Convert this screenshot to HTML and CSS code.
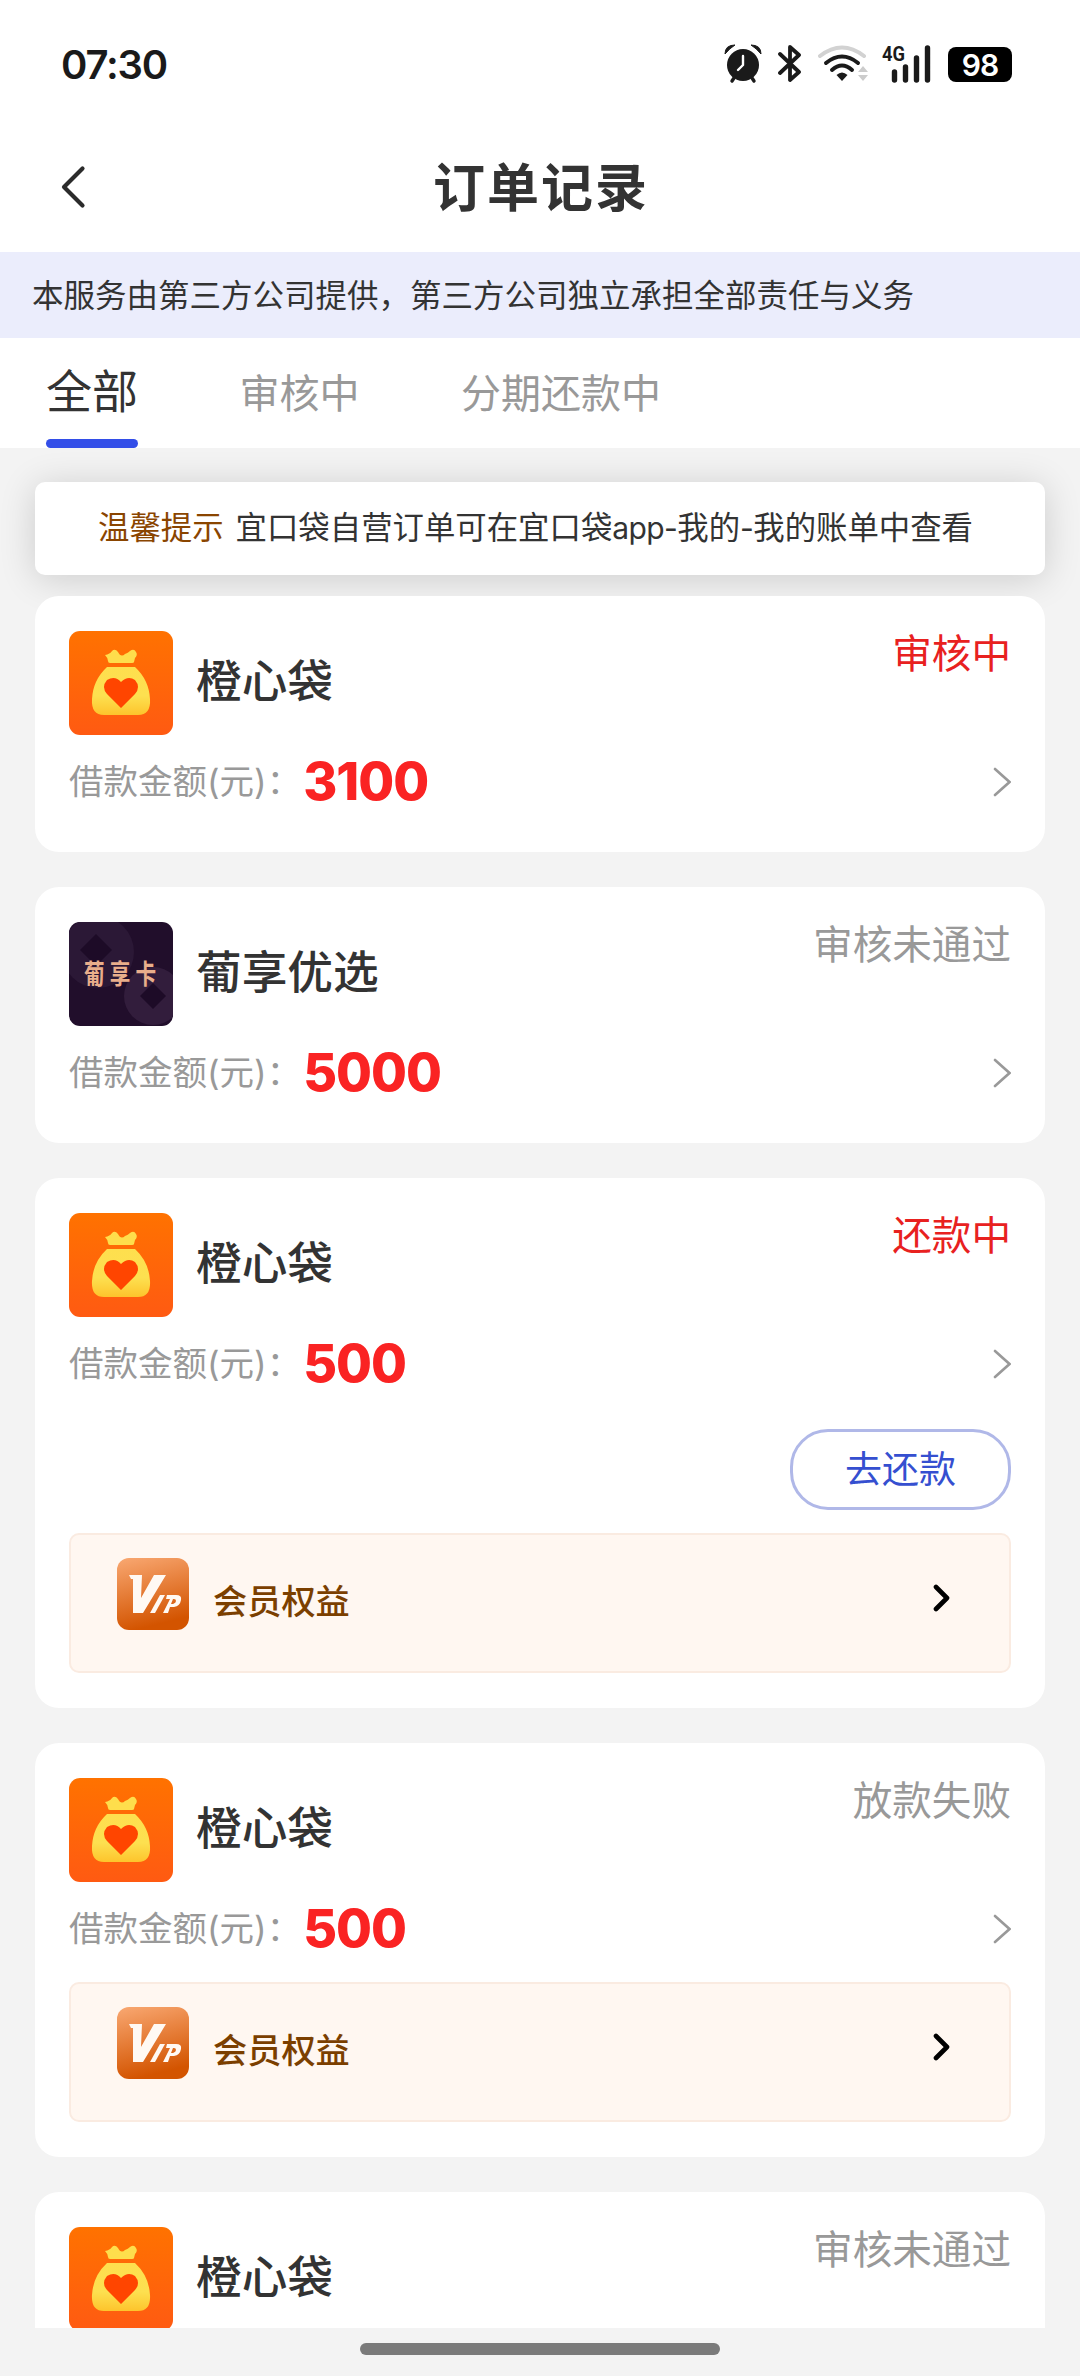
FILE: index.html
```html
<!DOCTYPE html>
<html lang="zh-CN">
<head>
<meta charset="utf-8">
<title>订单记录</title>
<link rel="stylesheet" href="styles.css">
</head>
<body>
<svg class="defs" width="0" height="0" aria-hidden="true">
  <defs>
    <linearGradient id="orange" x1="0" y1="0" x2="0" y2="1"><stop offset="0" stop-color="#ff7200"/><stop offset="1" stop-color="#ff5a12"/></linearGradient>
    <linearGradient id="gold" x1="0" y1="0" x2="0" y2="1"><stop offset="0" stop-color="#fedf4e"/><stop offset="0.6" stop-color="#fde050"/><stop offset="1" stop-color="#fdc42c"/></linearGradient>
    <linearGradient id="copper" x1="0" y1="0" x2="0.25" y2="1"><stop offset="0" stop-color="#f9a872"/><stop offset="1" stop-color="#d35400"/></linearGradient>
  </defs>
  <symbol id="bag" viewBox="0 0 104 104">
    <rect width="104" height="104" rx="11" fill="url(#orange)"/>
    <path d="M36 24 Q41 23 43 20 Q46 17 49 21 Q52 27 56 23 Q59 22 61 20 Q65 17 67 21 Q69 24 66 27 L65 31 Q65 32 63 32 H41 Q39 32 39 30 Q39 27 36 24 Z" fill="#fede4c"/>
    <path d="M38 36 H66 Q80 49 81 68 Q82 84 69 84 H35 Q22 84 23 68 Q24 49 38 36 Z" fill="url(#gold)"/>
    <path d="M52 77 L38 63 Q32 56 38 49 Q46 44 52 51 Q59 44 66 49 Q72 56 66 63 Z" fill="#ff4500"/>
  </symbol>
  <symbol id="more" viewBox="0 0 18 30">
    <path d="M2 2 L16.500 15 L2 28" fill="none" stroke="#999" stroke-width="2.6" stroke-linecap="round"/>
  </symbol>
  <symbol id="vip" viewBox="0 0 72 72">
    <rect width="72" height="72" rx="12" fill="url(#copper)"/>
    <path d="M12 17 H25 L24 40 L37 17 H49 L26 55 H16 L16 21 H14 Z" fill="#fff9f3"/>
    <path d="M43 37 H48 L38 55 H33 Z" fill="#fff9f3"/>
    <path fill-rule="evenodd" d="M50 37 H59 Q65 37 64 42 Q63 48 57 49 H53 L51 55 H46 L53 41 H49 Z M56 41 L54 46 H56 Q59 45 59 43 Q59 41 57 41 Z" fill="#fff9f3"/>
  </symbol>
  <symbol id="vip-more" viewBox="0 0 18 28">
    <path d="M3 3 L14 14 L3 25" fill="none" stroke="#000" stroke-width="4.6" stroke-linecap="round" stroke-linejoin="round"/>
  </symbol>
</svg>

<div class="screen">
  <div class="statusbar">
    <span class="clock">07:30</span>
    <div class="indicators">
      <svg class="alarm" width="38" height="40" viewBox="0 0 38 40">
        <circle cx="19" cy="21" r="16" fill="#1a1a1a"/>
        <path d="M1 10 Q1 1 11 1 Q6 4 1 10 Z M37 10 Q37 1 27 1 Q32 4 37 10 Z" fill="#1a1a1a" stroke="#1a1a1a" stroke-width="1"/>
        <path d="M10 34 L8 37 M28 34 L30 37" stroke="#1a1a1a" stroke-width="3.4" stroke-linecap="round"/>
        <path d="M19 12 V21 L14 26" fill="none" stroke="#fff" stroke-width="2.4" stroke-linecap="round" stroke-linejoin="round"/>
      </svg>
      <svg class="bluetooth" width="24" height="40" viewBox="0 0 24 40">
        <path d="M2 10 L21 28 L12 36 V3 L21 11 L2 29" fill="none" stroke="#1a1a1a" stroke-width="3.8" stroke-linejoin="round" stroke-linecap="round"/>
      </svg>
      <svg class="wifi" width="50" height="40" viewBox="0 0 50 40">
        <path d="M2 12 Q24 -5 46 12" fill="none" stroke="#d2d2d2" stroke-width="4" stroke-linecap="round"/>
        <path d="M8 19 Q24 6 40 19" fill="none" stroke="#1a1a1a" stroke-width="4" stroke-linecap="round"/>
        <path d="M14 26 Q24 17 34 26" fill="none" stroke="#1a1a1a" stroke-width="4" stroke-linecap="round"/>
        <path d="M18.500 31 Q24 26 29.500 31 L24 37 Z" fill="#1a1a1a"/>
        <path d="M40 28 L45 22 L50 28 Z M40 31 L45 37 L50 31 Z" fill="#ccc"/>
      </svg>
      <svg class="cell" width="50" height="40" viewBox="0 0 50 40">
        <text class="net" x="0" y="17" textLength="23" lengthAdjust="spacingAndGlyphs">4G</text>
        <path d="M12.500 28 V36 M23.500 23 V36 M34.500 14 V36 M45.500 4 V36" stroke="#1a1a1a" stroke-width="5.400" stroke-linecap="round"/>
      </svg>
      <span class="battery">98</span>
    </div>
  </div>

  <header class="titlebar">
    <svg class="back" width="26" height="44" viewBox="0 0 26 44">
      <path d="M22.500 3.500 L4 22 L22.500 40.500" fill="none" stroke="#2b2b2b" stroke-width="4.200" stroke-linecap="round" stroke-linejoin="round"/>
    </svg>
    <h1 class="title">订单记录</h1>
  </header>

  <p class="notice">本服务由第三方公司提供，第三方公司独立承担全部责任与义务</p>

  <nav class="tabs">
    <a class="tab active">全部</a>
    <a class="tab">审核中</a>
    <a class="tab">分期还款中</a>
  </nav>

  <main class="list">
    <div class="tip"><span class="tip-label">温馨提示</span><span class="tip-text">宜口袋自营订单可在宜口袋<span class="latin">app-</span>我的<span class="latin">-</span>我的账单中查看</span></div>

    <section class="card">
      <div class="head">
        <svg class="logo"><use href="#bag"/></svg>
        <h2 class="name">橙心袋</h2>
        <span class="state red">审核中</span>
      </div>
      <div class="amount"><span class="label">借款金额(元)：</span><b class="sum">3100</b><svg class="more"><use href="#more"/></svg></div>
    </section>

    <section class="card">
      <div class="head">
        <svg class="logo" viewBox="0 0 104 104">
          <clipPath id="round"><rect width="104" height="104" rx="11"/></clipPath>
          <g clip-path="url(#round)">
            <rect width="104" height="104" fill="#210e2b"/>
            <circle cx="29" cy="30" r="36" fill="#2b1836"/>
            <path d="M27 12 L43 28 L27 44 L11 28 Z" fill="#1d0b27"/>
            <circle cx="84" cy="74" r="29" fill="#321d3c"/>
            <path d="M84 61 L97 74 L84 87 L71 74 Z" fill="#1d0b27"/>
            <text class="logo-text" transform="translate(15 62) scale(0.86 1.16)">葡享卡</text>
          </g>
        </svg>
        <h2 class="name">葡享优选</h2>
        <span class="state">审核未通过</span>
      </div>
      <div class="amount"><span class="label">借款金额(元)：</span><b class="sum">5000</b><svg class="more"><use href="#more"/></svg></div>
    </section>

    <section class="card">
      <div class="head">
        <svg class="logo"><use href="#bag"/></svg>
        <h2 class="name">橙心袋</h2>
        <span class="state red">还款中</span>
      </div>
      <div class="amount"><span class="label">借款金额(元)：</span><b class="sum">500</b><svg class="more"><use href="#more"/></svg></div>
      <div class="actions"><button class="repay">去还款</button></div>
      <div class="vip"><svg class="vip-icon"><use href="#vip"/></svg><span class="vip-text">会员权益</span><svg class="vip-more"><use href="#vip-more"/></svg></div>
    </section>

    <section class="card">
      <div class="head">
        <svg class="logo"><use href="#bag"/></svg>
        <h2 class="name">橙心袋</h2>
        <span class="state">放款失败</span>
      </div>
      <div class="amount"><span class="label">借款金额(元)：</span><b class="sum">500</b><svg class="more"><use href="#more"/></svg></div>
      <div class="vip"><svg class="vip-icon"><use href="#vip"/></svg><span class="vip-text">会员权益</span><svg class="vip-more"><use href="#vip-more"/></svg></div>
    </section>

    <section class="card">
      <div class="head">
        <svg class="logo"><use href="#bag"/></svg>
        <h2 class="name">橙心袋</h2>
        <span class="state">审核未通过</span>
      </div>
    </section>
  </main>

  <footer class="homebar"><span class="handle"></span></footer>
</div>
</body>
</html>
```
FILE: styles.css
```css
* { box-sizing: border-box; margin: 0; padding: 0; }
body {
  width: 1080px;
  height: 2376px;
  overflow: hidden;
  font-family: Inter, "Noto Sans CJK SC", sans-serif;
  color: #333;
  background: #f3f3f3;
}
svg { display: block; flex: none; }
.defs { position: absolute; }
.screen { display: flex; flex-direction: column; height: 2376px; }

.statusbar {
  flex: none;
  height: 128px;
  padding: 0 68px 0 61px;
  display: flex;
  justify-content: space-between;
  align-items: center;
  background: #fff;
}
.clock { font-size: 40px; font-weight: 600; letter-spacing: -1.2px; color: #1a1a1a; }
.indicators { display: flex; align-items: center; }
.alarm { margin-right: 16px; }
.bluetooth { margin-right: 16px; }
.wifi { margin-right: 14px; }
.cell { margin-right: 16px; overflow: visible; }
.net { font: 700 21px Roboto, sans-serif; fill: #1a1a1a; }
.battery {
  width: 64px;
  height: 35px;
  border-radius: 8px;
  background: #000;
  color: #fff;
  font-size: 30px;
  font-weight: 600;
  line-height: 36px;
  letter-spacing: -1px;
  text-align: center;
}

.titlebar {
  flex: none;
  height: 124px;
  padding: 0 60px;
  display: grid;
  grid-template-columns: 26px 1fr 26px;
  align-items: center;
  background: #fff;
}
.back { margin-bottom: 6px; }
.title { font-size: 52px; line-height: 72px; letter-spacing: 2px; text-indent: 2px; text-align: center; margin-bottom: 2px; }

.notice {
  flex: none;
  height: 86px;
  padding-left: 32px;
  font-size: 31.5px;
  line-height: 87px;
  white-space: nowrap;
  background: #ebedfc;
}

.tabs {
  flex: none;
  height: 110px;
  padding-left: 46px;
  display: flex;
  gap: 101.5px;
  background: #fff;
}
.tab { font-size: 40px; line-height: 111px; height: 110px; color: #999; }
.tab.active { font-size: 46px; line-height: 107px; color: #333; display: flex; flex-direction: column; }
.tab.active::after { content: ""; height: 9px; margin-top: -6px; border-radius: 4.5px; background: #334ee8; flex: none; }

.list { flex: 1; min-height: 0; overflow: hidden; padding: 34px 35px 0; }
.tip {
  height: 93px;
  margin-bottom: 21px;
  padding: 0 0 6px 63px;
  display: flex;
  align-items: center;
  gap: 12px;
  border-radius: 10px;
  background: #fff;
  box-shadow: 0 4px 36px rgba(0, 0, 0, 0.16);
  font-size: 31.400px;
  white-space: nowrap;
}
.tip-label { color: #8a4500; }
.latin { font-size: 30px; letter-spacing: -0.6px; }

.card { padding: 35px 34px; margin-bottom: 35px; border-radius: 24px; background: #fff; }
.head { display: flex; height: 104px; }
.logo { width: 104px; height: 104px; }
.logo-text { font-size: 24px; letter-spacing: 6px; font-weight: 700; fill: #e9ae8b; }
.name { margin-left: 23px; font-size: 45.700px; font-weight: 500; line-height: 101px; }
.state { margin-left: auto; font-size: 39.6px; line-height: 47px; color: #999; }
.state.red { color: #e8211f; }
.amount { margin-top: 11px; height: 71px; display: flex; align-items: center; }
.label { padding-bottom: 5px; font-size: 34.500px; color: #999; }
.sum { margin-left: 2px; font-size: 52px; font-weight: 800; letter-spacing: -1px; color: #fa2323; }
.more { width: 18px; height: 30px; margin-left: auto; }

.actions { margin: 30px 0 23px; display: flex; justify-content: flex-end; }
.repay {
  width: 221px;
  height: 81px;
  padding-bottom: 5px;
  border: 3px solid #b0b8e8;
  border-radius: 38px;
  background: #fff;
  font: inherit;
  font-size: 37px;
  color: #354fd0;
}
.vip {
  height: 140px;
  margin-top: 18px;
  padding: 23px 58px 0 46px;
  display: flex;
  border: 2px solid #faebe1;
  border-radius: 10px;
  background: #fff7f1;
}
.vip-icon { width: 72px; height: 72px; }
.vip-text { margin-left: 24px; font-size: 34.200px; font-weight: 500; line-height: 87px; color: #7b3f00; }
.vip-more { width: 18px; height: 28px; margin: 26px 0 0 auto; }

.homebar { flex: none; height: 48px; padding-top: 15px; display: flex; justify-content: center; }
.handle { width: 360px; height: 12px; border-radius: 6px; background: #7a7a7a; }
```
